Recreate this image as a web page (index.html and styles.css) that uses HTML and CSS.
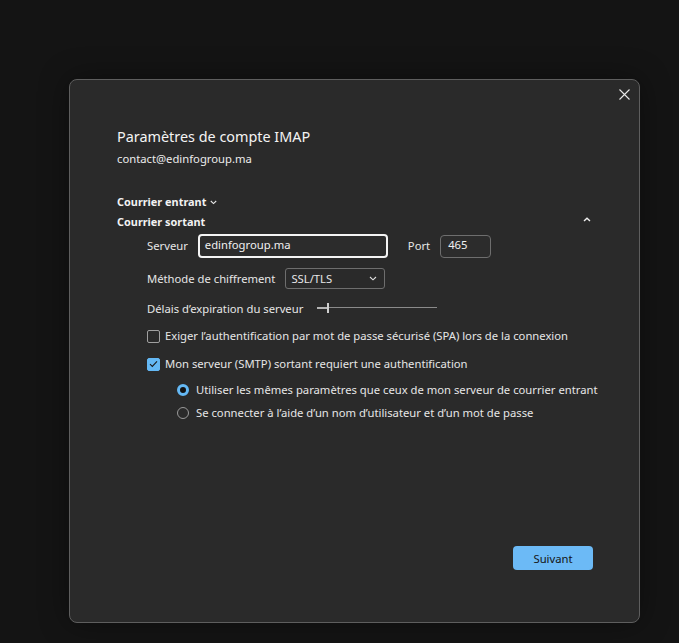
FILE: index.html
```html
<!DOCTYPE html>
<html lang="fr">
<head>
<meta charset="utf-8">
<title>Paramètres de compte IMAP</title>
<link rel="stylesheet" href="styles.css">
</head>
<body>
<div class="dialog">
  <button class="close" aria-label="Fermer">
    <svg width="11" height="11" viewBox="0 0 11 11"><path d="M0.5 0.5L10.5 10.5M10.5 0.5L0.5 10.5" stroke="#e8e8e8" stroke-width="1.1" fill="none"/></svg>
  </button>
  <div class="title">Paramètres de compte IMAP</div>
  <div class="email">contact@edinfogroup.ma</div>

  <div class="section entrant">Courrier entrant<span class="chev-down">
    <svg width="7" height="5" viewBox="0 0 7 5"><path d="M0.8 1L3.5 3.6L6.2 1" stroke="#e8e8e8" stroke-width="1.1" fill="none"/></svg></span></div>
  <div class="section sortant"><span>Courrier sortant</span><span class="chev-up">
    <svg width="8" height="5" viewBox="0 0 8 5"><path d="M1 4L4 1.2L7 4" stroke="#f0f0f0" stroke-width="1.4" fill="none"/></svg></span></div>

  <div class="form">
    <div class="row server-row">
      <span class="label">Serveur</span>
      <div class="input focused">edinfogroup.ma</div>
      <span class="label port-label">Port</span>
      <div class="input port">465</div>
    </div>
    <div class="row method-row">
      <span class="label">Méthode de chiffrement</span>
      <div class="select"><span>SSL/TLS</span>
        <svg width="8" height="5" viewBox="0 0 8 5"><path d="M1 1L4 3.8L7 1" stroke="#e0e0e0" stroke-width="1.1" fill="none"/></svg>
      </div>
    </div>
    <div class="row slider-row">
      <span class="label">Délais d’expiration du serveur</span>
      <div class="slider">
        <div class="filled"></div>
        <div class="thumb"></div>
        <div class="rest"></div>
      </div>
    </div>
    <div class="row check-row first">
      <span class="checkbox"></span>
      <span class="label">Exiger l’authentification par mot de passe sécurisé (SPA) lors de la connexion</span>
    </div>
    <div class="row check-row second">
      <span class="checkbox checked">
        <svg width="9" height="8" viewBox="0 0 9 8"><path d="M1 4.2L3.3 6.4L8 1.4" stroke="#1a1a1a" stroke-width="1.1" fill="none"/></svg>
      </span>
      <span class="label">Mon serveur (SMTP) sortant requiert une authentification</span>
    </div>
    <div class="radios">
      <div class="row radio-row r1">
        <span class="radio on"></span>
        <span class="label">Utiliser les mêmes paramètres que ceux de mon serveur de courrier entrant</span>
      </div>
      <div class="row radio-row r2">
        <span class="radio"></span>
        <span class="label">Se connecter à l’aide d’un nom d’utilisateur et d’un mot de passe</span>
      </div>
    </div>
  </div>

  <div class="footer">
    <button class="primary">Suivant</button>
  </div>
</div>
</body>
</html>
```

FILE: styles.css
```css
html, body {
  margin: 0;
  padding: 0;
  background: #141414;
}
body {
  font-family: "Noto Sans", "Open Sans", sans-serif;
  color: #e8e8e8;
  font-size: 11.25px;
  width: 679px;
  height: 643px;
  overflow: hidden;
}
.dialog {
  position: relative;
  box-sizing: border-box;
  margin: 79px 0 0 69px;
  width: 571px;
  height: 544px;
  background: #2a2a2a;
  border: 1px solid #5e5e5e;
  border-radius: 8px;
  padding: 47px 46px 52px 47px;
  display: flex;
  flex-direction: column;
  box-shadow: 0 0 30px rgba(0,0,0,0.4);
}
.close {
  position: absolute;
  top: 9px;
  right: 9px;
  background: none;
  border: 0;
  padding: 0;
  width: 11px;
  height: 11px;
  display: flex;
}
.title {
  font-size: 14.4px;
  line-height: 20px;
  color: #f4f4f4;
}
.email {
  margin-top: 4px;
  line-height: 16px;
  color: #ececec;
}
.section {
  font-weight: 700;
  line-height: 16px;
  color: #f2f2f2;
  font-size: 10.9px;
}
.entrant {
  margin-top: 27px;
  display: flex;
  align-items: center;
}
.chev-down {
  display: flex;
  margin-left: 4px;
  margin-top: 1px;
}
.sortant {
  margin-top: 4px;
  display: flex;
  justify-content: space-between;
  align-items: center;
}
.chev-up {
  display: flex;
  margin-right: 2px;
  margin-top: -5px;
}
.form {
  padding-left: 30px;
  display: flex;
  flex-direction: column;
}
.row {
  display: flex;
  align-items: center;
}
.label {
  line-height: 16px;
  color: #e6e6e6;
  white-space: nowrap;
}
.server-row {
  margin-top: 4px;
  height: 24px;
}
.input {
  box-sizing: border-box;
  flex-shrink: 0;
  height: 24px;
  border: 1px solid #6e6e6e;
  border-radius: 4px;
  background: #2c2c2c;
  padding: 2px 6px 0;
  line-height: 16px;
  color: #f0f0f0;
}
.input.focused {
  margin-left: 10px;
  width: 190px;
  border: 2px solid #f4f4f4;
  padding: 1px 5px 0;
}
.port-label {
  margin-left: 20px;
}
.input.port {
  margin-left: 10px;
  width: 51px;
  height: 23px;
  padding-left: 7px;
  padding-top: 1px;
}
.method-row {
  margin-top: 10px;
  height: 21px;
}
.select {
  box-sizing: border-box;
  flex-shrink: 0;
  margin-left: 10px;
  width: 100px;
  height: 21px;
  border: 1px solid #6e6e6e;
  border-radius: 3px;
  display: flex;
  align-items: center;
  justify-content: space-between;
  padding: 0 7px 0 5px;
  line-height: 16px;
}
.slider-row {
  margin-top: 12px;
  height: 16px;
}
.slider {
  margin-left: 14px;
  width: 120px;
  height: 12px;
  display: flex;
  align-items: center;
  margin-top: -3px;
  flex-shrink: 0;
}
.slider .filled {
  width: 10px;
  height: 2px;
  background: #b4b4b4;
}
.slider .thumb {
  width: 2px;
  height: 10px;
  background: #cfcfcf;
}
.slider .rest {
  flex: 1;
  height: 1px;
  background: #8a8a8a;
}
.check-row {
  height: 20px;
}
.check-row.first {
  margin-top: 9px;
}
.check-row.second {
  margin-top: 8px;
}
.checkbox {
  box-sizing: border-box;
  flex-shrink: 0;
  width: 13px;
  height: 13px;
  border: 1px solid #a0a0a0;
  border-radius: 2px;
  margin-right: 5px;
  display: flex;
  align-items: center;
  justify-content: center;
}
.checkbox.checked {
  background: #64b8f4;
  border-color: #64b8f4;
}
.radios {
  padding-left: 30px;
  display: flex;
  flex-direction: column;
}
.radio-row {
  height: 20px;
}
.radio-row.r1 {
  margin-top: 6px;
}
.radio-row.r2 {
  margin-top: 3px;
}
.radio {
  box-sizing: border-box;
  flex-shrink: 0;
  width: 12px;
  height: 12px;
  border-radius: 50%;
  border: 1px solid #9a9a9a;
  margin-right: 7px;
}
.radio.on {
  border: 3.5px solid #64b8f4;
  background: #111;
}
.footer {
  margin-top: auto;
  display: flex;
  justify-content: flex-end;
}
.primary {
  width: 80px;
  height: 24px;
  border: 0;
  border-radius: 4px;
  background: #6cbaf6;
  color: #141414;
  font-family: "Noto Sans", "Open Sans", sans-serif;
  font-size: 11.25px;
  padding: 0;
}
```
